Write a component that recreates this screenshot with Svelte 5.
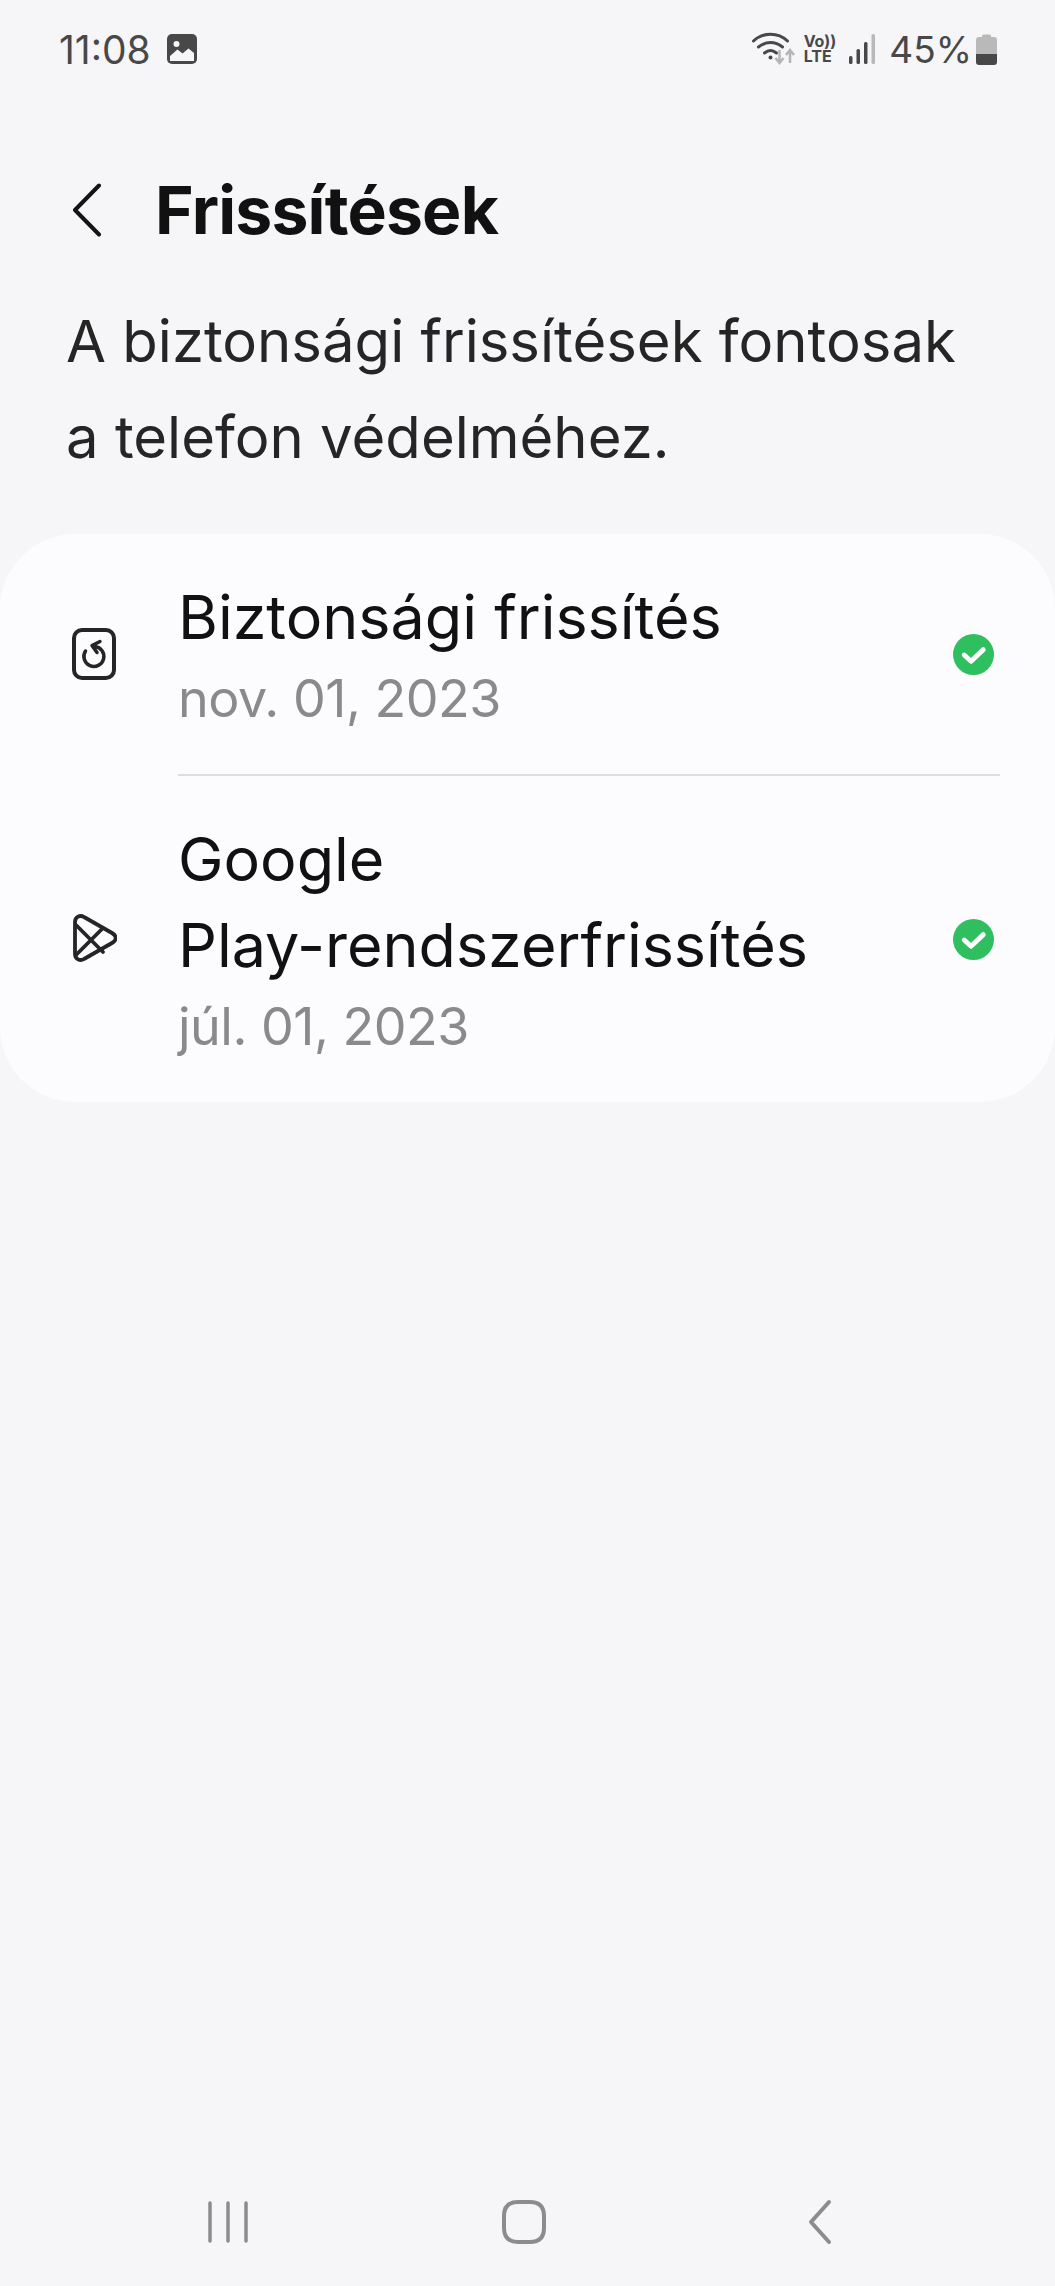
<script lang="ts">
	const items = [
		{ key: 'security', title: ['Biztonsági frissítés'], date: 'nov. 01, 2023' },
		{ key: 'play', title: ['Google', 'Play-rendszerfrissítés'], date: 'júl. 01, 2023' }
	];
</script>

<div class="screen">
	<div class="status">
		<div class="status-left">
			<span class="time">11:08</span>
			<svg class="pic" width="30" height="30" viewBox="0 0 30 30">
				<rect width="30" height="30" rx="5" fill="#484848" />
				<circle cx="9.500" cy="10" r="3" fill="#f6f6f8" />
				<path d="M3 27v-5l7.500-6.500 5 4 6-5 5.500 4.500v8z" fill="#f6f6f8" />
			</svg>
		</div>
		<div class="status-right">
			<svg class="wifi" width="44" height="34" viewBox="0 0 44 34" fill="none">
				<path d="M1.500 9C11 0 26 0 35.500 9" stroke="#484848" stroke-width="3" stroke-linecap="round" />
				<path d="M6.500 15C14 9 23 9 30.500 15" stroke="#484848" stroke-width="3" stroke-linecap="round" />
				<path d="M12.500 21C17 17.500 20 17.500 24.500 21" stroke="#484848" stroke-width="3" stroke-linecap="round" />
				<circle cx="18.500" cy="25.500" r="2" fill="#484848" />
				<path d="M27.500 18v12M23.500 26l4 5 4-5" stroke="#b5b5b5" stroke-width="2.500" />
				<path d="M38 31V19M34 23l4-5 4 5" stroke="#b5b5b5" stroke-width="2.500" />
			</svg>
			<div class="volte"><span>Vo))</span><span>LTE</span></div>
			<svg class="signal" width="26" height="30" viewBox="0 0 26 30">
				<rect x="0" y="22" width="3.500" height="8" rx="1.500" fill="#484848" />
				<rect x="7.500" y="15" width="3.500" height="15" rx="1.500" fill="#484848" />
				<rect x="15" y="8" width="3.500" height="22" rx="1.500" fill="#484848" />
				<rect x="22.500" y="0" width="3.500" height="30" rx="1.500" fill="#b8b8b8" />
			</svg>
			<span class="pct">45%</span>
			<svg class="battery" width="21" height="31" viewBox="0 0 21 31">
				<path d="M6 3V2a1.500 1.500 0 0 1 1.500-1.500h6A1.500 1.500 0 0 1 15 2v1h3a3 3 0 0 1 3 3v14H0V6a3 3 0 0 1 3-3z" fill="#b9b9b9" />
				<path d="M0 20h21v8a3 3 0 0 1-3 3H3a3 3 0 0 1-3-3z" fill="#484848" />
			</svg>
		</div>
	</div>

	<header class="header">
		<svg class="back" width="34" height="54" viewBox="0 0 34 54" fill="none">
			<path d="M29 2.500L5 27l24 24.500" stroke="#141414" stroke-width="4" stroke-linecap="round" stroke-linejoin="round" />
		</svg>
		<h1>Frissítések</h1>
	</header>

	<p class="intro">A biztonsági frissítések fontosak a telefon védelméhez.</p>

	<section class="card">
		{#each items as item, i (item.key)}
			<div class="row">
				<div class="row-icon">
					{#if item.key === 'security'}
						<svg width="44" height="52" viewBox="0 0 44 52" fill="none" stroke="#252525">
							<rect x="2" y="2" width="40" height="48" rx="8" stroke-width="4" />
							<path d="M13.500 23a10 10 0 1 0 9-4.500" stroke-width="3.500" stroke-linecap="round" />
							<path d="M28 13.500l-8 4 5 7" stroke-width="3.500" stroke-linejoin="round" stroke-linecap="round" />
						</svg>
					{:else}
						<svg class="play" width="44" height="48" viewBox="0 0 44 48" fill="none" stroke="#252525" stroke-width="3.800" stroke-linejoin="round" stroke-linecap="round">
							<path d="M2 8c0-5 5-7.500 9-5l28 16c5 3 5 7 0 10L11 45c-4 2.500-9 0-9-5z" />
							<path d="M3 11l27 27M3 41l27-27" />
						</svg>
					{/if}
				</div>
				<div class="row-body" class:divided={i > 0}>
					<div class="row-text">
						<div class="title">
							{#each item.title as line}
								<div>{line}</div>
							{/each}
						</div>
						<div class="date">{item.date}</div>
					</div>
					<svg class="check" width="41" height="41" viewBox="0 0 42 42">
						<circle cx="21" cy="21" r="21" fill="#2fbf5f" />
						<path d="M11.500 21.500l7 6.500 12.500-12" fill="none" stroke="#fff" stroke-width="5" stroke-linecap="round" stroke-linejoin="round" />
					</svg>
				</div>
			</div>
		{/each}
	</section>

	<nav class="navbar">
		<svg width="44" height="44" viewBox="0 0 44 44" fill="none" stroke="#8c8c8e" stroke-width="3.500" stroke-linecap="round">
			<path d="M4 3v38M22 3v38M40 3v38" />
		</svg>
		<svg width="44" height="44" viewBox="0 0 44 44" fill="none" stroke="#8c8c8e" stroke-width="4">
			<path d="M16 2h12c9 0 14 4 14 14v12c0 10-5 14-14 14H16C7 42 2 38 2 28V16C2 6 7 2 16 2z" />
		</svg>
		<svg class="nav-back" width="24" height="46" viewBox="0 0 24 46" fill="none" stroke="#8c8c8e" stroke-width="4" stroke-linecap="round" stroke-linejoin="round">
			<path d="M21 3L3 23l18 20" />
		</svg>
	</nav>
</div>

<style>
	:global(body) {
		margin: 0;
		background: #f6f6f8;
	}

	.screen {
		display: flex;
		flex-direction: column;
		height: 2286px;
		overflow: hidden;
		background: #f6f6f8;
		font-family: Inter, 'Noto Sans', sans-serif;
		color: #252525;
	}

	.status {
		display: flex;
		justify-content: space-between;
		align-items: center;
		height: 98px;
		padding: 0 58px 0 59px;
		color: #484848;
	}

	.status-left,
	.status-right {
		display: flex;
		align-items: center;
	}

	.time {
		font-size: 39px;
		margin-right: 16px;
	}

	.wifi {
		margin-right: 8px;
	}

	.volte {
		display: flex;
		flex-direction: column;
		margin-right: 13px;
		font-size: 16px;
		line-height: 15px;
		font-weight: 700;
	}

	.signal {
		margin-right: 14px;
	}

	.pct {
		font-size: 37px;
		margin-right: 4px;
	}

	.header {
		display: flex;
		align-items: center;
		height: 70px;
		margin-top: 77px;
		padding-left: 70px;
	}

	.back {
		margin-right: 51px;
	}

	h1 {
		margin: 0;
		font-size: 66px;
		font-weight: 700;
		letter-spacing: -0.8px;
		color: #111;
	}

	.intro {
		margin: 48px 66px 0;
		font-size: 58px;
		line-height: 96px;
		width: 900px;
		color: #252525;
	}

	.card {
		margin-top: 49px;
		border-radius: 75px;
		background: #fcfcff;
	}

	.row {
		display: flex;
	}

	.row-icon {
		display: flex;
		align-items: center;
		flex: none;
		width: 178px;
		box-sizing: border-box;
		padding-left: 72px;
	}

	.play {
		margin-left: 1px;
	}

	.row-body {
		flex: 1;
		display: flex;
		align-items: center;
		justify-content: space-between;
		margin-right: 55px;
		padding-right: 6px;
	}

	.row-body.divided {
		border-top: 2px solid #dedee0;
	}

	.row-text {
		padding: 40px 0 42px;
	}

	.title {
		font-size: 61px;
		line-height: 86px;
		color: #111;
	}

	.date {
		margin-top: 6px;
		font-size: 52px;
		line-height: 66px;
		letter-spacing: -0.5px;
		color: #8a8a8c;
	}

	.navbar {
		display: flex;
		align-items: center;
		gap: 252px;
		margin-top: auto;
		padding-left: 206px;
		height: 128px;
	}

	.nav-back {
		margin-left: 10px;
	}
</style>
